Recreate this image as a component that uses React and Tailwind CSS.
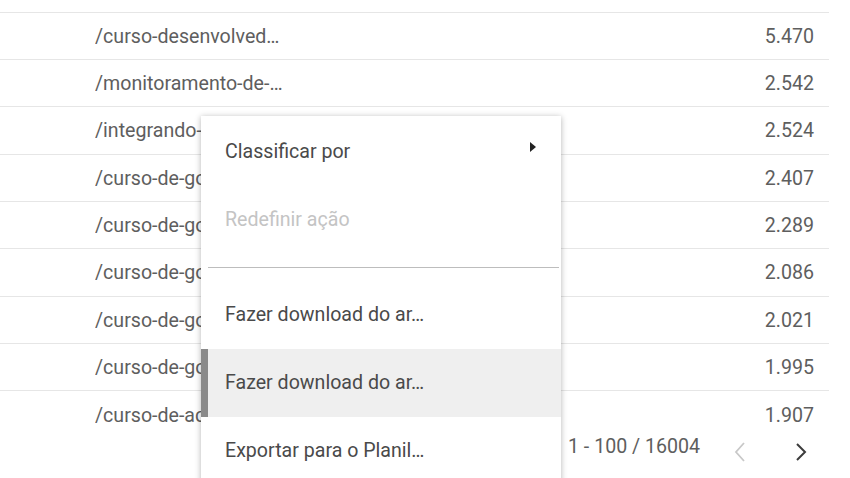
import React from "react";

const rows = [
  ["/curso-desenvolved…", "5.470", false],
  ["/monitoramento-de-…", "2.542", false],
  ["/integrando-o-goo", "2.524", true],
  ["/curso-de-google", "2.407", true],
  ["/curso-de-google", "2.289", true],
  ["/curso-de-google", "2.086", true],
  ["/curso-de-google", "2.021", true],
  ["/curso-de-google", "1.995", true],
  ["/curso-de-aqui", "1.907", true],
];

function Item({ children, disabled, active, arrow }) {
  return (
    <div
      className={
        "relative flex h-[68px] items-center pl-[24px] pr-[24px] text-[19.6px] " +
        (disabled ? "text-[#c4c4c4] " : "text-[#4a4a4a] ") +
        (active ? "bg-[#efefef]" : "")
      }
    >
      {active && <div className="absolute left-0 top-0 h-full w-[7px] bg-[#8a8a8a]" />}
      <span className="flex-1 truncate">{children}</span>
      {arrow && (
        <svg width="6" height="10" viewBox="0 0 6 10" className="mb-[10px] mr-[1px]">
          <path d="M0 0 L6 5 L0 10 Z" fill="#222" />
        </svg>
      )}
    </div>
  );
}

export default function App() {
  return (
    <div
      className="relative h-[478px] w-[850px] overflow-hidden bg-white text-[#5e5e5e]"
      style={{ fontFamily: "Roboto, 'Liberation Sans', sans-serif" }}
    >
      <div className="w-[829px]">
        <div className="h-[13px] border-b border-[#e6e6e6]" />
        {rows.map(([path, val, clipped], i) => (
          <div
            key={i}
            className={
              "flex items-center pl-[95px] pr-[15px] pt-[1px] text-[19.6px] " +
              (i === 2 || i === 5 ? "h-[48px] " : "h-[47px] ") +
              (i < rows.length - 1 ? "border-b border-[#e6e6e6]" : "pt-[3px]")
            }
          >
            <div className="flex-1">
              <div
                className={
                  clipped
                    ? "w-[106px] overflow-hidden whitespace-nowrap"
                    : "truncate"
                }
              >
                {path}
              </div>
            </div>
            <span>{val}</span>
          </div>
        ))}
        <div className="mt-[-6px] flex h-[30px] items-center pl-[568px] text-[19.6px] text-[#5e5e5e]">
          <span className="w-[158px]">1 - 100 / 16004</span>
          <svg width="12" height="20" viewBox="0 0 12 20" className="ml-[8px] mt-[10px]">
            <path d="M10 1 L2 10 L10 19" fill="none" stroke="#c8c8c8" strokeWidth="1.8" />
          </svg>
          <svg width="12" height="20" viewBox="0 0 12 20" className="ml-[49px] mt-[10px]">
            <path d="M2 2 L10 10 L2 18" fill="none" stroke="#3c3c3c" strokeWidth="2" />
          </svg>
        </div>
      </div>

      <div className="absolute left-[201px] top-[116px] w-[360px] bg-white pt-[2px] shadow-[0_1px_6px_rgba(0,0,0,0.3)]">
        <Item arrow>Classificar por</Item>
        <Item disabled>Redefinir ação</Item>
        <div className="py-[13px] pl-[7px] pr-[2px]">
          <div className="h-px bg-[#bdbdbd]" />
        </div>
        <Item>Fazer download do ar…</Item>
        <Item active>Fazer download do ar…</Item>
        <Item>Exportar para o Planil…</Item>
      </div>
    </div>
  );
}
